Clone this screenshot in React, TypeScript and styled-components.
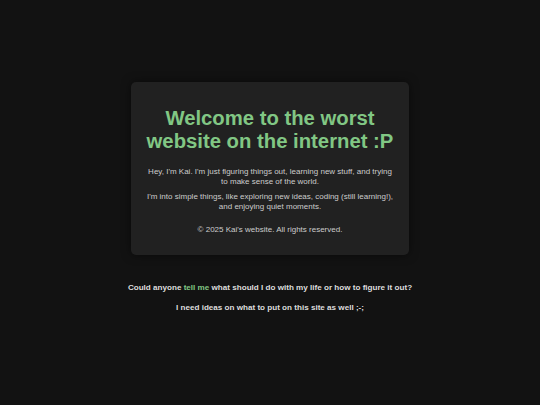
import React from "react";
import styled, { createGlobalStyle } from "styled-components";

const GlobalStyle = createGlobalStyle`
  html, body {
    margin: 0;
    padding: 0;
    background: #121212;
  }
  body {
    font-family: "Liberation Sans", Arial, sans-serif;
    color: #e0e0e0;
  }
`;

const App = () => {
  return (
    <>
      <GlobalStyle />
      <StyledPage>
        <StyledCard>
          <StyledTitle>Welcome to the worst website on the internet :P</StyledTitle>
          <StyledText>
            Hey, I'm Kai. I'm just figuring things out, learning new stuff, and
            trying to make sense of the world.
          </StyledText>
          <StyledText>
            I'm into simple things, like exploring new ideas, coding (still
            learning!), and enjoying quiet moments.
          </StyledText>
          <StyledFooter>© 2025 Kai's website. All rights reserved.</StyledFooter>
        </StyledCard>

        <StyledNote>
          Could anyone <StyledLink href="#">tell me</StyledLink> what should I
          do with my life or how to figure it out?
        </StyledNote>
        <StyledNote>I need ideas on what to put on this site as well ;-;</StyledNote>
      </StyledPage>
    </>
  );
};

export default App;

const StyledPage = styled.div`
  min-height: 100vh;
  display: flex;
  flex-direction: column;
  align-items: center;
  justify-content: center;
  box-sizing: border-box;
`;

const StyledCard = styled.div`
  width: 278px;
  box-sizing: border-box;
  padding: 25px 14px 20px;
  background-color: #212121;
  border-radius: 5px;
  box-shadow: 0 0 10px rgba(0, 0, 0, 0.5);
  text-align: center;
  margin-bottom: 28px;
`;

const StyledTitle = styled.h1`
  margin: 0 0 14px;
  font-size: 20.3px;
  line-height: 23px;
  font-weight: 700;
  color: #81c784;
`;

const StyledText = styled.p`
  margin: 0 0 5px;
  font-size: 8px;
  line-height: 10px;
  color: #cccccc;
`;

const StyledFooter = styled.p`
  margin: 13px 0 0;
  font-size: 8px;
  line-height: 10px;
  color: #cccccc;
`;

const StyledNote = styled.p`
  margin: 0 0 10px;
  font-size: 8.1px;
  line-height: 10px;
  font-weight: 700;
  color: #dddddd;
`;

const StyledLink = styled.a`
  color: #81c784;
  text-decoration: none;
`;
